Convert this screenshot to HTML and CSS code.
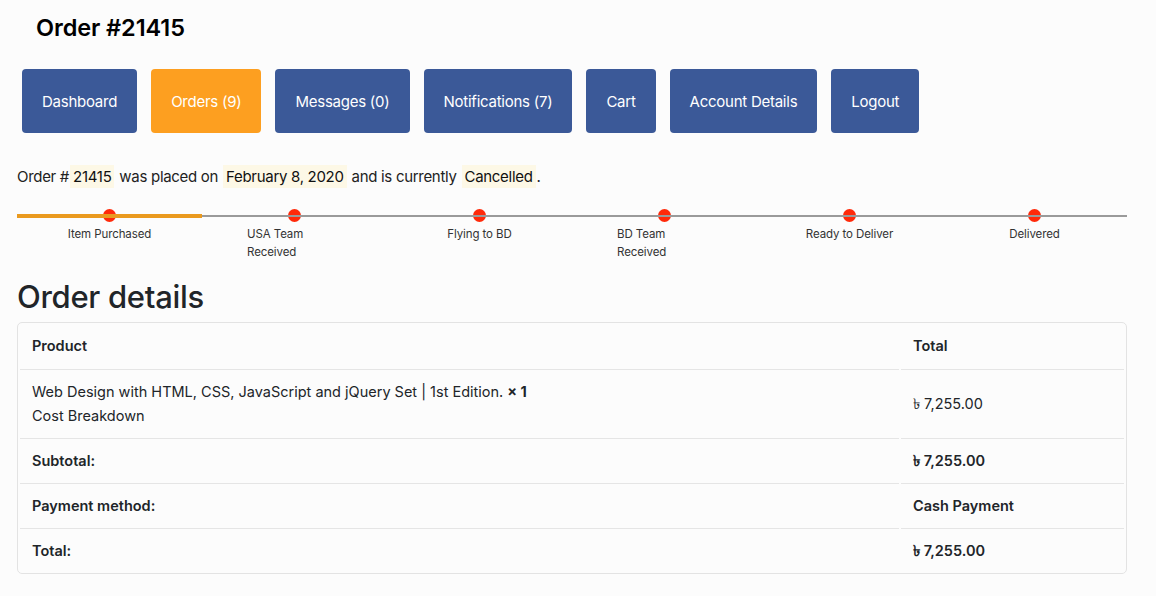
FILE: index.html
```html
<!DOCTYPE html>
<html lang="en">
<head>
<meta charset="utf-8">
<title>Order #21415</title>
<link rel="stylesheet" href="styles.css">
</head>
<body>
<div class="page">
  <h1 class="title">Order #21415</h1>
  <nav class="tabs">
    <a class="tab">Dashboard</a>
    <a class="tab active">Orders (9)</a>
    <a class="tab">Messages (0)</a>
    <a class="tab">Notifications (7)</a>
    <a class="tab">Cart</a>
    <a class="tab">Account Details</a>
    <a class="tab">Logout</a>
  </nav>
  <p class="status">Order #<mark>21415</mark> was placed on <mark>February 8, 2020</mark> and is currently <mark>Cancelled</mark>.</p>
  <div class="tracker">
    <div class="track-bar"><div class="track-done"></div></div>
    <div class="steps">
      <div class="step"><span class="dot"></span><span class="label">Item Purchased</span></div>
      <div class="step"><span class="dot"></span><span class="label">USA Team Received</span></div>
      <div class="step"><span class="dot"></span><span class="label">Flying to BD</span></div>
      <div class="step"><span class="dot"></span><span class="label">BD Team Received</span></div>
      <div class="step"><span class="dot"></span><span class="label">Ready to Deliver</span></div>
      <div class="step"><span class="dot"></span><span class="label">Delivered</span></div>
    </div>
  </div>
  <h2 class="details-title">Order details</h2>
  <div class="table-wrap">
    <table class="order-table">
      <thead>
        <tr><th class="col-product">Product</th><th class="col-total">Total</th></tr>
      </thead>
      <tbody>
        <tr class="item-row">
          <td>Web Design with HTML, CSS, JavaScript and jQuery Set | 1st Edition. <strong>× 1</strong><br>Cost Breakdown</td>
          <td>৳&nbsp;7,255.00</td>
        </tr>
      </tbody>
      <tfoot>
        <tr><th>Subtotal:</th><th>৳&nbsp;7,255.00</th></tr>
        <tr><th>Payment method:</th><th>Cash Payment</th></tr>
        <tr><th>Total:</th><th>৳&nbsp;7,255.00</th></tr>
      </tfoot>
    </table>
  </div>
</div>
</body>
</html>
```
FILE: styles.css
```css
* { box-sizing: border-box; }
html, body { margin: 0; padding: 0; }
body {
  background: #fcfcfc;
  font-family: Inter, "Noto Sans", "DejaVu Sans", sans-serif;
  color: #212529;
}
.page {
  padding: 0 29px 0 17px;
}
.title {
  margin: 0 0 0 19px;
  padding-top: 15px;
  font-size: 23.5px;
  line-height: 26px;
  font-weight: 600;
  color: #000;
  letter-spacing: -0.1px;
}
.tabs {
  display: flex;
  gap: 14px;
  margin: 28px 0 0 5px;
}
.tab {
  display: flex;
  align-items: center;
  justify-content: center;
  height: 64px;
  padding: 0 20px;
  background: #3b5998;
  color: #fff;
  border-radius: 4px;
  font-size: 15px;
  letter-spacing: -0.25px;
  text-decoration: none;
}
.tab.active { background: #fd9f20; }
.status {
  margin: 32px 0 0;
  font-size: 15px;
  line-height: 24px;
  color: #222;
  letter-spacing: -0.3px;
}
.status mark {
  background: #fdf8e6;
  color: #111;
  padding: 2px 3px;
  margin: 0 1px;
}
.tracker {
  position: relative;
  margin-top: 26px;
}
.track-bar {
  height: 2px;
  background: #9a9a9a;
  margin-top: 13px;
  position: relative;
}
.track-done {
  position: absolute;
  left: 0;
  top: -1px;
  width: 185px;
  height: 4px;
  background: #ea9a1f;
}
.steps {
  display: grid;
  grid-template-columns: repeat(6, 1fr);
  margin-top: -8px;
}
.step {
  display: flex;
  flex-direction: column;
  align-items: center;
}
.dot {
  width: 13px;
  height: 13px;
  border-radius: 50%;
  background: #ff2a0a;
}
.label {
  max-width: 95px;
  margin-top: 3px;
  font-size: 11.5px;
  line-height: 18px;
  color: #333;
  text-align: left;
  letter-spacing: -0.1px;
}
.details-title {
  margin: 18px 0 0;
  font-size: 31px;
  line-height: 36px;
  font-weight: 500;
  color: #212529;
  letter-spacing: -0.3px;
}
.table-wrap {
  margin-top: 7px;
  border: 1px solid #e3e3e3;
  border-radius: 5px;
  overflow: hidden;
}
.order-table {
  width: 100%;
  border-collapse: separate;
  border-spacing: 2px 0;
  font-size: 14.5px;
  color: #212529;
}
.order-table th, .order-table td {
  text-align: left;
  padding: 12px 12px;
  line-height: 20px;
  border-top: 1px solid #e5e5e5;
  vertical-align: middle;
}
.order-table thead th { border-top: none; padding-top: 13px; padding-bottom: 13px; }
.order-table th { font-weight: 600; }
.col-total { width: 223px; }
.item-row td { padding-top: 10px; padding-bottom: 10px; line-height: 24px; }
.item-row strong { font-weight: 700; }
```
